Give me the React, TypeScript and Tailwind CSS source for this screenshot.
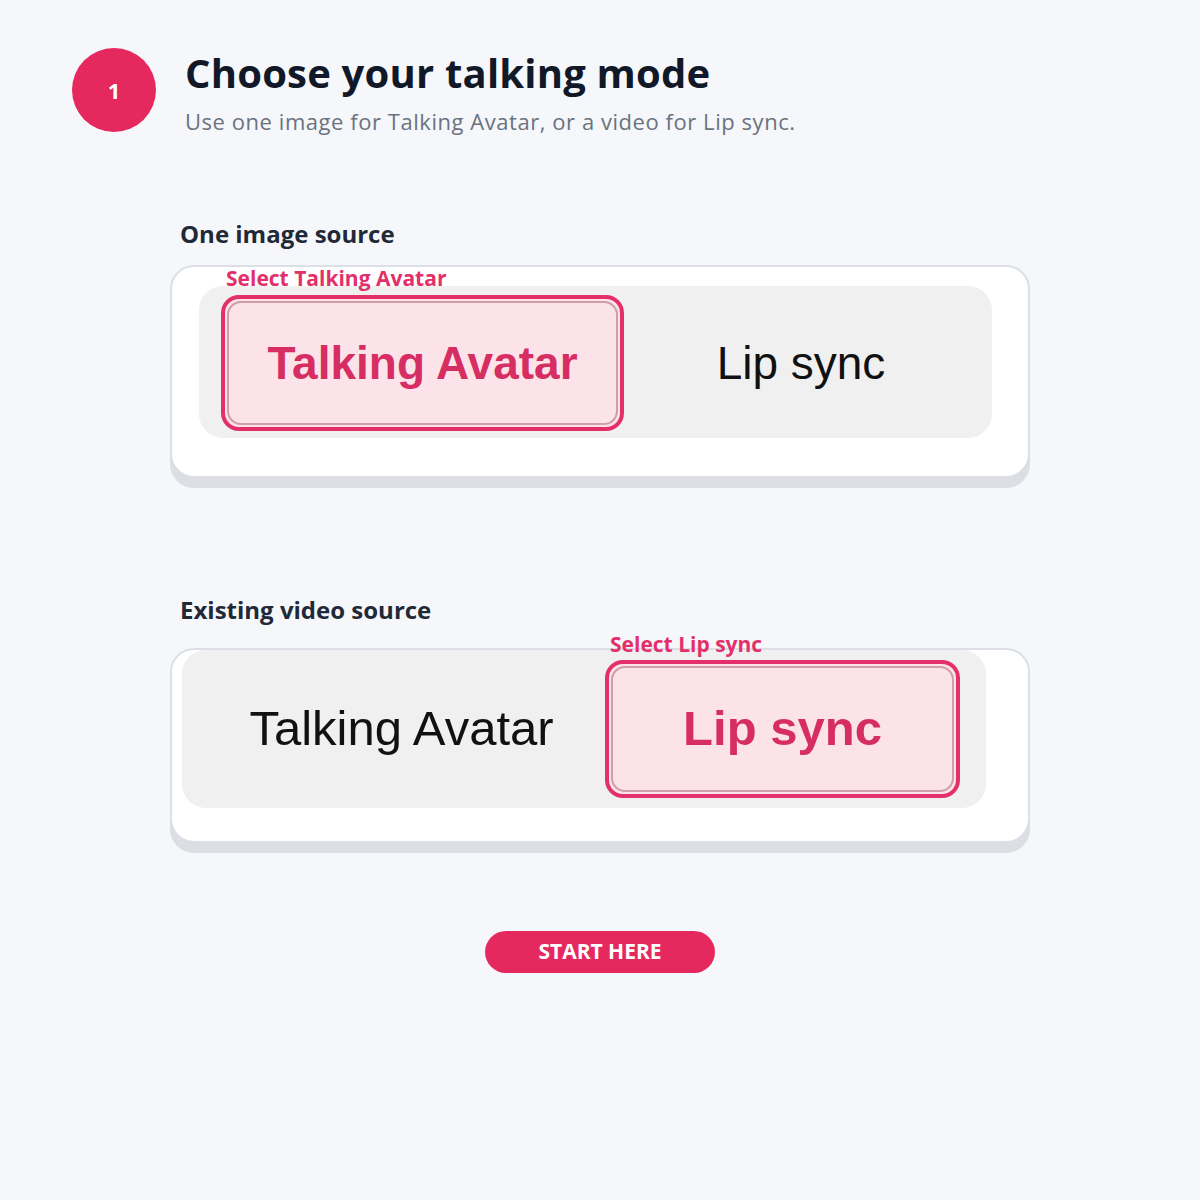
import React from 'react';

const UI = '"Open Sans", "Noto Sans", sans-serif';
const ARIAL = '"Liberation Sans", Arial, sans-serif';

function Selected({ children, className }: { children: React.ReactNode; className: string }) {
  return (
    <div className={`rounded-[18px] border-4 border-[#e3306a] bg-[#fbe3e9] p-[2px] ${className}`}>
      <div className="flex h-full w-full items-center justify-center rounded-[14px] border-2 border-[#b9828f]/70">
        {children}
      </div>
    </div>
  );
}

export default function App() {
  return (
    <div className="min-h-[1200px] w-full bg-[#f5f7fa]" style={{ fontFamily: UI }}>
      {/* Step header */}
      <div className="flex items-start gap-[29px] pl-[72px] pt-[48px]">
        <div className="flex h-[84px] w-[84px] shrink-0 items-center justify-center rounded-full bg-[#e5295f] text-[22px] font-bold text-white">
          1
        </div>
        <div className="pt-[1px]">
          <h1 className="text-[40px] font-bold leading-[48px] tracking-[0.2px] text-[#111827]">Choose your talking mode</h1>
          <p className="mt-[10px] text-[22px] leading-[28px] tracking-[0.55px] text-[#6b7280]">
            Use one image for Talking Avatar, or a video for Lip sync.
          </p>
        </div>
      </div>

      <div className="ml-[170px] w-[860px]">
        {/* One image source */}
        <h2 className="mt-[83px] pl-[10px] text-[24px] font-bold leading-[32px] text-[#1f2937]">One image source</h2>
        <div className="relative mt-[15px] h-[213px] rounded-[24px] border-2 border-[#dcdfe5] bg-white px-[27px] pt-[19px] shadow-[0_10px_0_#dcdee3]">
          <span className="absolute left-[54px] top-[-2px] text-[21px] font-bold leading-[26px] text-[#e3306a]">
            Select Talking Avatar
          </span>
          <div className="flex h-[152px] w-[793px] rounded-[24px] bg-[#f0f0f0] pl-[22px] pt-[9px]">
            <Selected className="h-[136px] w-[403px]">
              <span className="text-[46px] font-bold text-[#d62d62]" style={{ fontFamily: ARIAL }}>
                Talking Avatar
              </span>
            </Selected>
            <div className="flex h-[136px] flex-1 items-center justify-center pr-[14px]">
              <span className="text-[46px] text-[#111]" style={{ fontFamily: ARIAL }}>
                Lip sync
              </span>
            </div>
          </div>
        </div>

        {/* Existing video source */}
        <h2 className="mt-[116px] pl-[10px] text-[24px] font-bold leading-[32px] text-[#1f2937]">Existing video source</h2>
        <div className="relative mt-[22px] h-[195px] rounded-[24px] border-2 border-[#dcdfe5] bg-white pl-[10px] shadow-[0_10px_0_#dcdee3]">
          <span className="absolute left-[438px] top-[-19px] text-[21px] font-bold leading-[26px] text-[#e3306a]">
            Select Lip sync
          </span>
          <div className="flex h-[158px] w-[804px] rounded-[24px] bg-[#f0f0f0] pr-[26px] pt-[10px]">
            <div className="flex h-[138px] flex-1 items-center justify-center pl-[16px]">
              <span className="text-[49px] text-[#111]" style={{ fontFamily: ARIAL }}>
                Talking Avatar
              </span>
            </div>
            <Selected className="h-[138px] w-[355px]">
              <span className="text-[49px] font-bold text-[#d62d62]" style={{ fontFamily: ARIAL }}>
                Lip sync
              </span>
            </Selected>
          </div>
        </div>

        {/* CTA */}
        <div className="mt-[88px] flex justify-center">
          <button className="h-[42px] w-[230px] rounded-full bg-[#e5295f] text-[21px] font-bold text-white">
            START HERE
          </button>
        </div>
      </div>
    </div>
  );
}
